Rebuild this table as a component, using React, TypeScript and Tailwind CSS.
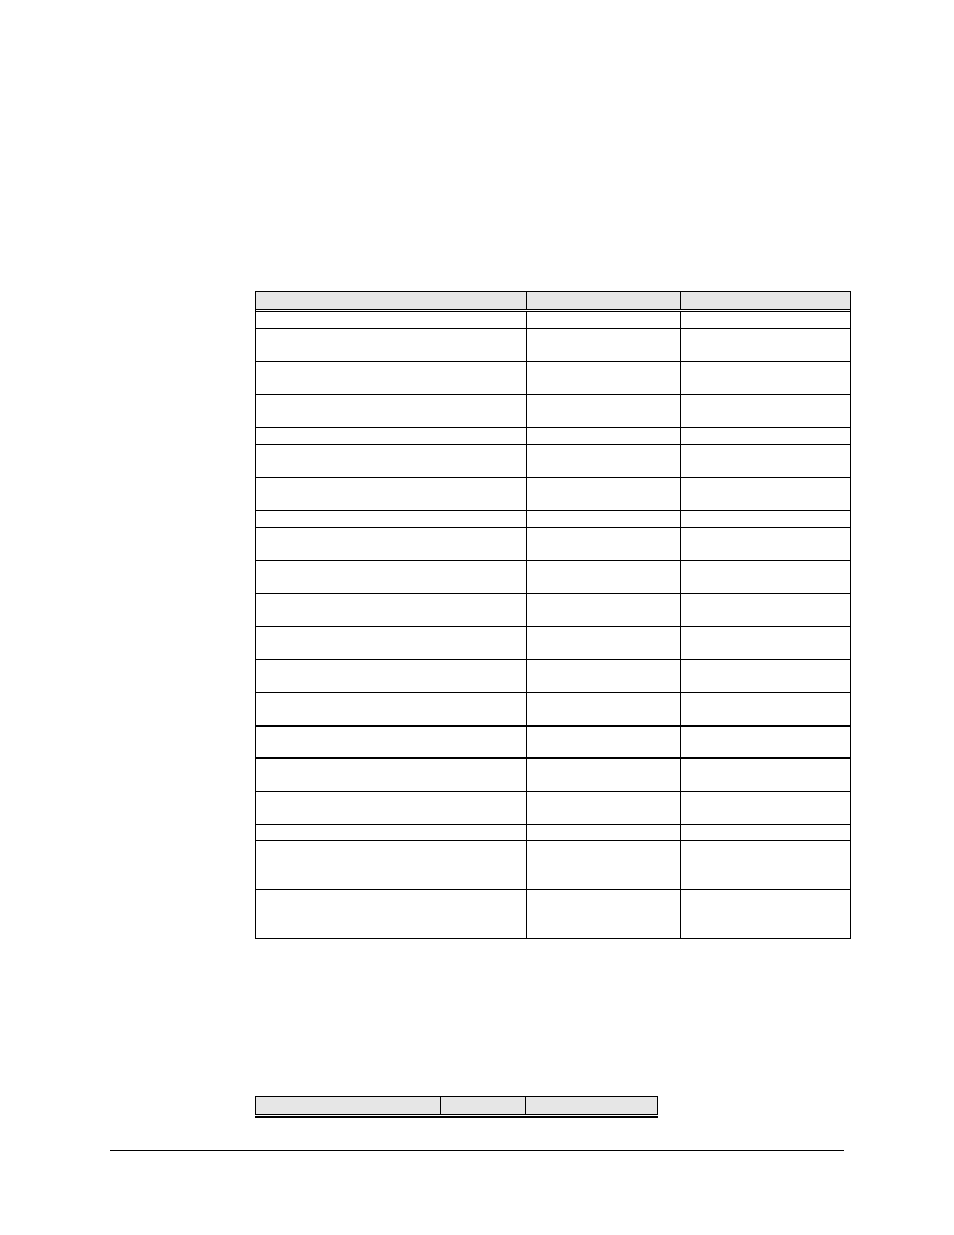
import React from "react";

const rows: { h: string; thick?: boolean }[] = [
  { h: "h-[17px]" },
  { h: "h-[33px]" },
  { h: "h-[33px]" },
  { h: "h-[33px]" },
  { h: "h-[17px]" },
  { h: "h-[33px]" },
  { h: "h-[33px]" },
  { h: "h-[17px]" },
  { h: "h-[33px]" },
  { h: "h-[33px]" },
  { h: "h-[33px]" },
  { h: "h-[33px]" },
  { h: "h-[33px]" },
  { h: "h-[34px]", thick: true },
  { h: "h-[32px]", thick: true },
  { h: "h-[33px]" },
  { h: "h-[33px]" },
  { h: "h-[16px]" },
  { h: "h-[49px]" },
  { h: "h-[48px]" },
];

function Row({ h, thick, last }: { h: string; thick?: boolean; last?: boolean }) {
  const border = last ? "" : thick ? "border-b-2 border-black" : "border-b border-black";
  return (
    <div className={`grid grid-cols-[270px_154px_170px] ${h} ${border}`}>
      <div />
      <div className="border-l border-black" />
      <div className="border-l border-black" />
    </div>
  );
}

export default function App() {
  return (
    <div
      className="w-[954px] h-[1235px] bg-white flex flex-col pt-[291px]"
      style={{ fontFamily: '"Liberation Sans", Arial, sans-serif' }}
    >
      <div className="ml-[255px] w-[596px] border border-black">
        <div className="grid grid-cols-[270px_154px_170px] h-[17px] bg-[#e6e6e6]">
          <div />
          <div className="border-l border-black" />
          <div className="border-l border-black" />
        </div>
        <div className="h-[3px] border-y border-black bg-white" />
        {rows.map((r, i) => (
          <Row key={i} h={r.h} thick={r.thick} last={i === rows.length - 1} />
        ))}
      </div>

      <div className="ml-[255px] mt-[157px] w-[403px]">
        <div className="grid grid-cols-[184px_85px_132px] h-[19px] border border-black bg-[#e6e6e6]">
          <div />
          <div className="border-l border-black" />
          <div className="border-l border-black" />
        </div>
        <div className="mt-px h-[2px] bg-black" />
      </div>

      <div className="ml-[110px] mt-[32px] w-[734px] h-px bg-black" />
    </div>
  );
}
